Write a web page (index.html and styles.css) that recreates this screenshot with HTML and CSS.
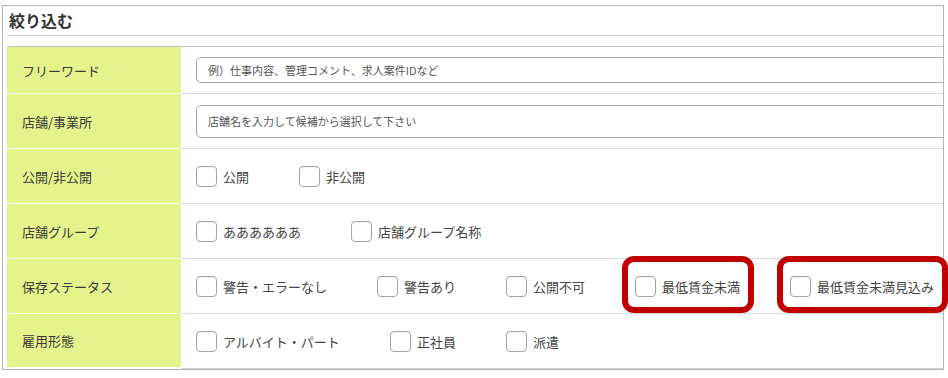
FILE: index.html
```html
<!DOCTYPE html>
<html lang="ja">
<head>
<meta charset="utf-8">
<title>絞り込む</title>
<link rel="stylesheet" href="styles.css">
</head>
<body>
<section class="panel">
  <h2 class="panel__title">絞り込む</h2>
  <div class="filter">
    <div class="filter__label filter__label--first">フリーワード</div>
    <div class="filter__value filter__value--first filter__value--input">
      <input class="text-input" type="text" placeholder="例）仕事内容、管理コメント、求人案件IDなど">
    </div>

    <div class="filter__label">店舗/事業所</div>
    <div class="filter__value filter__value--input">
      <input class="text-input text-input--tall" type="text" placeholder="店舗名を入力して候補から選択して下さい">
    </div>

    <div class="filter__label">公開/非公開</div>
    <div class="filter__value">
      <label class="check"><span class="check__box"></span>公開</label>
      <label class="check"><span class="check__box"></span>非公開</label>
    </div>

    <div class="filter__label">店舗グループ</div>
    <div class="filter__value">
      <label class="check"><span class="check__box"></span>ああああああ</label>
      <label class="check"><span class="check__box"></span>店舗グループ名称</label>
    </div>

    <div class="filter__label">保存ステータス</div>
    <div class="filter__value">
      <label class="check"><span class="check__box"></span>警告・エラーなし</label>
      <label class="check"><span class="check__box"></span>警告あり</label>
      <label class="check"><span class="check__box"></span>公開不可</label>
      <label class="check check--marked"><span class="check__box"></span>最低賃金未満</label>
      <label class="check check--marked"><span class="check__box"></span>最低賃金未満見込み</label>
    </div>

    <div class="filter__label filter__label--last">雇用形態</div>
    <div class="filter__value filter__value--last">
      <label class="check"><span class="check__box"></span>アルバイト・パート</label>
      <label class="check"><span class="check__box"></span>正社員</label>
      <label class="check"><span class="check__box"></span>派遣</label>
    </div>
  </div>
</section>
</body>
</html>
```

FILE: styles.css
```css
* {
  box-sizing: border-box;
}

html, body {
  margin: 0;
  padding: 0;
  background: #ffffff;
}

body {
  font-family: "Noto Sans CJK JP", "Noto Sans", sans-serif;
  color: #333333;
}

.panel {
  width: 942px;
  margin: 5px 0 0 2px;
  border: 1px solid #b4b4b4;
  padding: 0 0 0 4px;
}

.panel__title {
  margin: 0;
  height: 30px;
  padding: 3px 0 0 2px;
  font-size: 16px;
  line-height: 22px;
  font-weight: bold;
  color: #333333;
  border-bottom: 1px solid #d0d0d0;
}

.filter {
  margin-top: 10px;
  border-top: 1px solid #c4c4c4;
  display: grid;
  grid-template-columns: 174px 1fr;
}

.filter__label {
  height: 55px;
  display: flex;
  align-items: center;
  padding-left: 15px;
  background: #e4f38c;
  border-bottom: 1px solid #ffffff;
  font-size: 13px;
  color: #3a3a3a;
}

.filter__value {
  height: 55px;
  display: flex;
  align-items: center;
  gap: 50px;
  padding-left: 15px;
  border-bottom: 1px solid #dcdcdc;
  font-size: 13px;
  color: #444444;
}

.filter__label--first,
.filter__value--first {
  height: 47px;
}

.filter__label--last {
  border-bottom: 2px solid #ffffff;
}

.filter__value--last {
  border-bottom: 1px solid #d0d0d0;
}

.filter__value--input {
  overflow: hidden;
}

.text-input {
  flex: 0 0 auto;
  width: 800px;
  height: 26px;
  margin: 0;
  padding: 0 0 0 11px;
  border: 1px solid #a8a8a8;
  border-radius: 5px;
  font-family: "Noto Sans CJK JP", "Noto Sans", sans-serif;
  font-size: 11px;
  color: #333333;
  background: #ffffff;
}

.text-input--tall {
  height: 33px;
}

.text-input::placeholder {
  color: #555555;
  opacity: 1;
}

.check {
  position: relative;
  display: inline-flex;
  align-items: center;
  gap: 6px;
  white-space: nowrap;
  line-height: 21px;
}

.check__box {
  display: inline-block;
  width: 21px;
  height: 21px;
  border: 1px solid #a4a4a4;
  border-radius: 4px;
  background: #ffffff;
  box-shadow: inset 0 1px 1px rgba(0, 0, 0, 0.05);
}

.check--marked::after {
  content: "";
  position: absolute;
  top: -20px;
  bottom: -16px;
  left: -13px;
  right: -14px;
  border: 6px solid #c00000;
  border-radius: 12px;
  pointer-events: none;
}
```
